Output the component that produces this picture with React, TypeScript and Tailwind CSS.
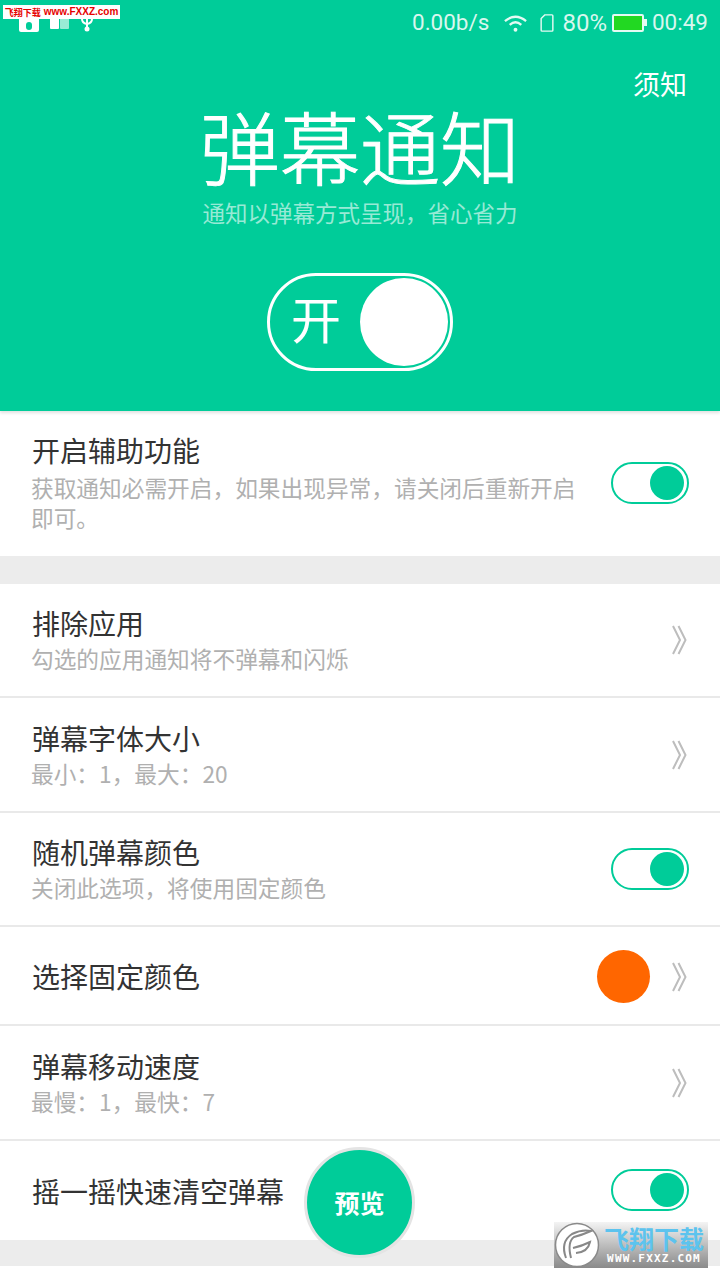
import { ReactNode } from 'react';

const FONT = { fontFamily: '"Noto Sans CJK SC", "Noto Sans", sans-serif' };

function Toggle() {
  return (
    <div className="flex h-[42px] w-[78px] items-center justify-end rounded-full border-2 border-[#00cc99] bg-white pr-[3px]">
      <div className="h-[34px] w-[34px] rounded-full bg-[#00cc99]" />
    </div>
  );
}

function Chevron() {
  return (
    <svg width="15" height="30" viewBox="0 0 15 30" fill="none" stroke="#bdbdbd" strokeWidth="2">
      <path d="M1 1 L8 15 L1 29" />
      <path d="M6.5 1 L13.5 15 L6.5 29" />
    </svg>
  );
}

function Row({ title, sub, right, height }: { title: string; sub?: string; right: ReactNode; height: string }) {
  return (
    <div className={`flex items-center justify-between border-b-2 border-[#e9e9e9] bg-white pl-8 ${height}`}>
      <div className={sub ? 'flex flex-col pt-[1px]' : 'flex flex-col'}>
        <div className="text-[28px] leading-[36px] text-[#333333]">{title}</div>
        {sub && <div className="-ml-[1px] mt-[1px] text-[22.7px] leading-[34px] text-[#b0b0b0]">{sub}</div>}
      </div>
      {right}
    </div>
  );
}

const chevronRight = (
  <div className="pr-[33px]">
    <Chevron />
  </div>
);
const toggleRight = (
  <div className="pb-[1px] pr-[31px]">
    <Toggle />
  </div>
);

function StatusBar() {
  return (
    <div className="flex h-[44px] items-center justify-between pl-[19px] pr-[12px] pt-[1px] text-[22.5px] text-[#d8f7ee]" style={{ fontFamily: 'Roboto, sans-serif' }}>
      <div className="flex items-center gap-[11px] pt-[1px]">
        <div className="flex h-[18px] w-[20px] items-end justify-center rounded-[2px] bg-white pb-[2px]">
          <div className="h-[8px] w-[6px] rounded-full bg-[#00cc99]" />
        </div>
        <div className="flex gap-[1px]">
          <div className="h-[12px] w-[9px] rounded-[1px] bg-white" />
          <div className="h-[12px] w-[9px] rounded-[1px] bg-white/60" />
        </div>
        <svg width="14" height="20" viewBox="0 0 14 20" fill="none" stroke="white" strokeWidth="2">
          <path d="M2 0 V6 Q2 10 7 11 Q12 10 12 6 V0" />
          <path d="M7 0 V15" />
          <circle cx="7" cy="16" r="2.5" fill="white" stroke="none" />
        </svg>
      </div>
      <div className="flex items-center">
        <span>0.00b/s</span>
        <svg className="ml-[14px]" width="25" height="20" viewBox="0 0 26 20" fill="none" stroke="#e4faf3" strokeWidth="2.4">
          <path d="M2 8 Q13 -1 24 8" />
          <path d="M7 12 Q13 6.5 19 12" />
          <circle cx="13" cy="17" r="2" fill="#e4faf3" stroke="none" />
        </svg>
        <svg className="ml-[12px]" width="14" height="18" viewBox="0 0 15 20" fill="none" stroke="#e4faf3" strokeWidth="1.6">
          <path d="M5 1 H13 Q14 1 14 2 V18 Q14 19 13 19 H2 Q1 19 1 18 V5 Z" />
        </svg>
        <span className="ml-[8px] text-[24px]">80%</span>
        <div className="ml-[5px] flex items-center">
          <div className="h-[18px] w-[32px] rounded-[2px] border-2 border-[#e4faf3] bg-[#22d822]" />
          <div className="h-[7px] w-[3px] bg-[#e4faf3]" />
        </div>
        <span className="ml-[5px]">00:49</span>
      </div>
    </div>
  );
}

function Header() {
  return (
    <div className="relative flex h-[411px] flex-col bg-[#00cc99] shadow-[0_2px_3px_rgba(0,0,0,0.12)]">
      <StatusBar />
      <div className="flex justify-end pr-[33px] pt-[20px] text-[27px] leading-[40px] text-white">须知</div>
      <div className="text-center text-[80px] leading-[80px] font-light text-white [-webkit-text-stroke:1px_white]">弹幕通知</div>
      <div className="mt-[11px] text-center text-[22.5px] leading-[34px] text-white/60">通知以弹幕方式呈现，省心省力</div>
      <div className="mt-[44px] flex justify-center">
        <div className="flex h-[98px] w-[186px] items-center justify-between rounded-full border-[3px] border-white pl-[21px] pr-[2px]">
          <span className="pb-[10px] text-[50px] leading-[60px] font-normal text-white">开</span>
          <div className="h-[88px] w-[88px] rounded-full bg-white" />
        </div>
      </div>
    </div>
  );
}

export default function App() {
  return (
    <div className="relative h-[1280px] w-[720px] overflow-hidden bg-white" style={FONT}>
      <Header />

      <div className="flex h-[145px] items-center justify-between bg-white pl-8">
        <div className="flex w-[550px] flex-col pb-[2px]">
          <div className="text-[28px] leading-[36px] text-[#333333]">开启辅助功能</div>
          <div className="-ml-[1px] mt-[5px] text-[22.7px] leading-[30px] text-[#b0b0b0]">获取通知必需开启，如果出现异常，请关闭后重新开启即可。</div>
        </div>
        {toggleRight}
      </div>
      <div className="h-[28px] bg-[#ececec]" />

      <Row height="h-[114px]" title="排除应用" sub="勾选的应用通知将不弹幕和闪烁" right={chevronRight} />
      <Row height="h-[115px]" title="弹幕字体大小" sub="最小：1，最大：20" right={chevronRight} />
      <Row height="h-[114px]" title="随机弹幕颜色" sub="关闭此选项，将使用固定颜色" right={toggleRight} />
      <Row
        height="h-[99px]"
        title="选择固定颜色"
        right={
          <div className="flex items-center gap-[22px] pr-[33px] pt-[2px]">
            <div className="h-[53px] w-[53px] rounded-full bg-[#ff6600]" />
            <Chevron />
          </div>
        }
      />
      <Row height="h-[115px] pt-[1px]" title="弹幕移动速度" sub="最慢：1，最快：7" right={chevronRight} />
      <div className="flex h-[99px] items-center justify-between bg-white pl-8">
        <div className="text-[28px] leading-[36px] text-[#333333]">摇一摇快速清空弹幕</div>
        {toggleRight}
      </div>
      <div className="h-[26px] bg-[#ececec]" />

      {/* floating preview button */}
      <div className="absolute left-[304px] top-[1147px] flex h-[111px] w-[111px] items-center justify-center rounded-full border-[3px] border-[#e4e4e4] bg-[#00cc99] text-[25px] font-bold text-white">
        预览
      </div>

      {/* top-left site watermark */}
      <div className="absolute left-[3px] top-[5px] flex h-[14px] w-[117px] items-center justify-center gap-[3px] bg-white leading-none font-bold whitespace-nowrap text-[#e60000]">
        <span className="text-[9px]">飞翔下载</span>
        <span className="text-[10px]" style={{ fontFamily: '"Liberation Sans", sans-serif' }}>www.FXXZ.com</span>
      </div>

      {/* bottom-right site watermark */}
      <div className="absolute left-[554px] top-[1222px] flex h-[46px] w-[154px] items-center bg-gradient-to-b from-[#f4f4f4] to-[#8a8a8a]">
        <svg width="46" height="46" viewBox="0 0 46 46" fill="none">
          <circle cx="23" cy="23" r="21.5" fill="#ffffff" stroke="#8a8a8a" strokeWidth="1.5" />
          <path d="M12 36 Q6 20 18 12 Q28 7 37 9 Q28 13 20 15 Q13 20 17 36" stroke="#888888" strokeWidth="2" />
          <path d="M19 26 Q28 24 36 20 Q34 30 22 31" stroke="#888888" strokeWidth="2" />
        </svg>
        <div className="flex flex-1 flex-col items-center">
          <div className="text-[25px] leading-[28px] font-bold text-[#5cc3ee]">飞翔下载</div>
          <div className="text-[11px] leading-[14px] font-bold tracking-[1.2px] text-white" style={{ fontFamily: '"DejaVu Sans Mono", monospace' }}>
            WWW.FXXZ.COM
          </div>
        </div>
      </div>
    </div>
  );
}
